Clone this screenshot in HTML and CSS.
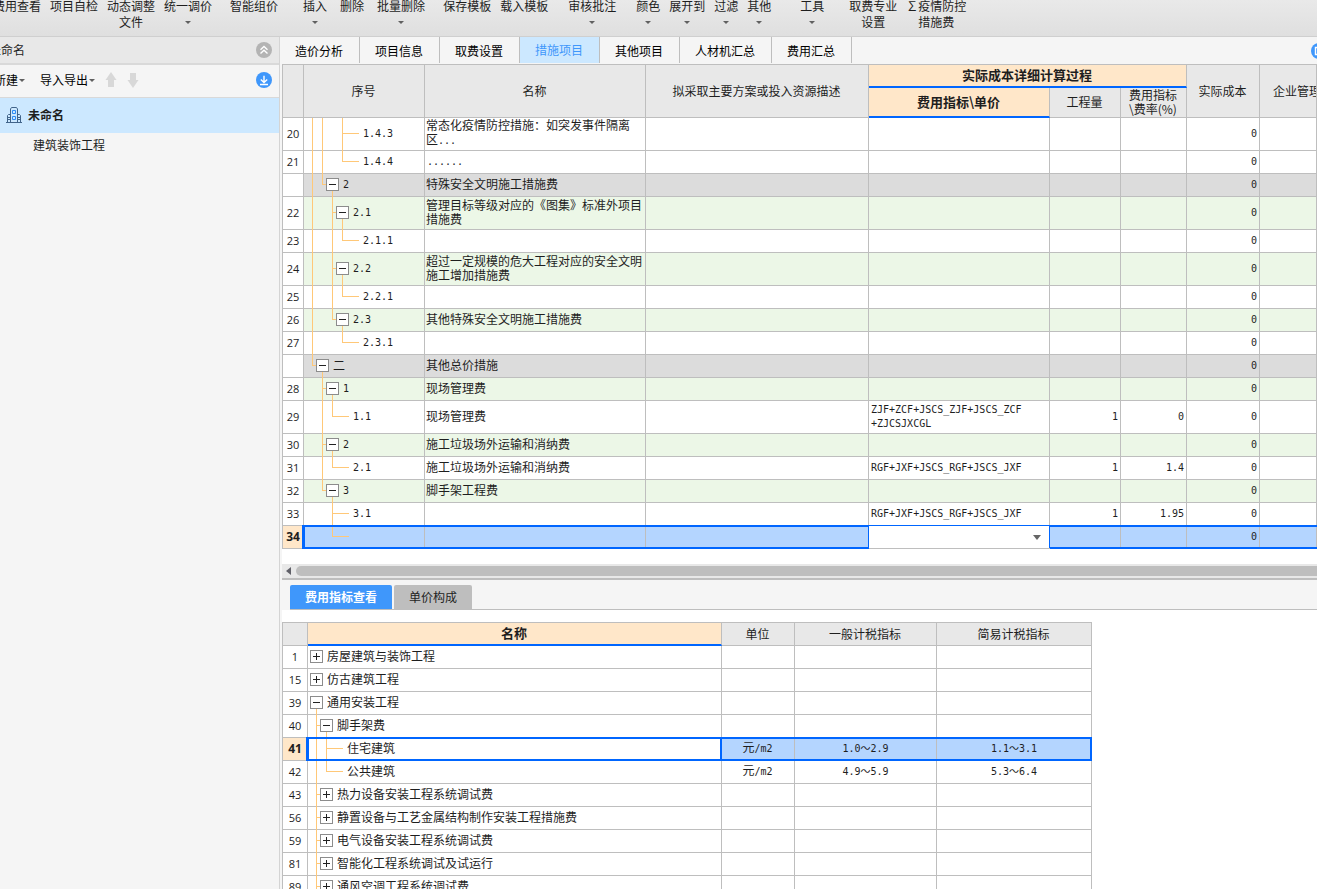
FILE: index.html
```html
<!DOCTYPE html>
<html lang="zh-CN">
<head>
<meta charset="utf-8">
<title>措施项目</title>
<link rel="stylesheet" href="styles.css">
</head>
<body>
<header class="ribbon">
  <div class="group"><button>费用查看</button><button>项目自检</button><button>动态调整<br>文件</button><button>统一调价<i class="caret"></i></button></div>
  <div class="group near"><button>智能组价</button></div>
  <div class="group mid wide"><button>插入<i class="caret"></i></button><button>删除</button><button>批量删除<i class="caret"></i></button></div>
  <div class="group near"><button>保存模板</button><button>载入模板</button></div>
  <div class="group step"><button>审核批注<i class="caret"></i></button></div>
  <div class="group step"><button>颜色<i class="caret"></i></button><button>展开到<i class="caret"></i></button><button>过滤<i class="caret"></i></button><button>其他<i class="caret"></i></button></div>
  <div class="group far"><button>工具<i class="caret"></i></button></div>
  <div class="group mid"><button>取费专业<br>设置</button><button>∑疫情防控<br>措施费</button></div>
</header>
<div class="workspace">
  <aside class="sidebar">
    <div class="side-head"><span class="project">未命名</span>
      <button class="round" aria-label="收起"><svg width="16" height="16" viewBox="0 0 16 16"><circle cx="8" cy="8" r="8" fill="#b4b4b4"/><path d="M4.500 7.800 8 4.500l3.500 3.300M4.500 11.500 8 8.200l3.500 3.300" fill="none" stroke="#fff" stroke-width="1.400"/></svg></button>
    </div>
    <div class="side-tools">
      <button class="menu">新建<i class="caret"></i></button>
      <button class="menu">导入导出<i class="caret"></i></button>
      <button class="arrow" aria-label="上移"><svg width="12" height="16" viewBox="0 0 12 16"><path d="M6 0 11.500 8H9v7H3V8H.5z" fill="#d8d8d8"/></svg></button>
      <button class="arrow" aria-label="下移"><svg width="12" height="16" viewBox="0 0 12 16"><path d="M6 16 .5 8H3V1h6v7h2.500z" fill="#d8d8d8"/></svg></button>
      <button class="round" aria-label="下载"><svg width="16" height="16" viewBox="0 0 16 16"><circle cx="8" cy="8" r="8" fill="#3f97fb"/><path d="M8 3.800v6.500M4.800 7.500 8 10.500l3.200-3M4 12.500h8" fill="none" stroke="#fff" stroke-width="1.400"/></svg></button>
    </div>
    <div class="node active">
      <svg width="16" height="16" viewBox="0 0 16 16" fill="none" stroke="#41648a"><path d="M0 15.500h16M1.500 15V8.500l1-1H4M14.500 15V8.500l-1-1H12M4.500 15V2L5.500.5h5L11.500 2v13M2 10.500h2M2 12.500h2M12 10.500h2M12 12.500h2"/><path d="M6.500 3.500h3v3h-3zM6.500 9.500h3v3h-3z" stroke="#2f8cf5"/></svg>
      <span>未命名</span>
    </div>
    <div class="node child">建筑装饰工程</div>
  </aside>
  <main class="content">
    <nav class="tabs">
      <button>造价分析</button><button>项目信息</button><button>取费设置</button><button class="on">措施项目</button><button>其他项目</button><button>人材机汇总</button><button>费用汇总</button>
      <svg class="more" width="16" height="16" viewBox="0 0 16 16"><circle cx="8" cy="8" r="8" fill="#3f97fb"/><path d="M4.500 4.500h7v7h-7z" fill="none" stroke="#fff" stroke-width="1.400"/></svg>
    </nav>
    <section class="upper">
      <table class="sheet measures">
        <colgroup><col class="c-no"><col class="c-seq"><col class="c-name"><col class="c-plan"><col class="c-index"><col class="c-qty"><col class="c-rate"><col class="c-cost"><col></colgroup>
        <thead>
          <tr class="h1"><th rowspan="2"></th><th rowspan="2">序号</th><th rowspan="2">名称</th><th rowspan="2">拟采取主要方案或投入资源描述</th><th colspan="3" class="hot">实际成本详细计算过程</th><th rowspan="2">实际成本</th><th rowspan="2" class="cut">企业管理费</th></tr>
          <tr class="h2"><th class="hot">费用指标\单价</th><th>工程量</th><th>费用指标<br>\费率(%)</th></tr>
        </thead>
        <tbody>
          <tr class="tall"><th>20</th><td><div class="tree"><i class="v"></i><i class="v"></i><i></i><i class="t"></i><b></b><span>1.4.3</span></div></td><td>常态化疫情防控措施：如突发事件隔离<br>区<span class="m">...</span></td><td></td><td></td><td></td><td></td><td class="n">0</td><td></td></tr>
          <tr><th>21</th><td><div class="tree"><i class="v"></i><i class="v"></i><i></i><i class="l"></i><b></b><span>1.4.4</span></div></td><td class="m">......</td><td></td><td></td><td></td><td></td><td class="n">0</td><td></td></tr>
          <tr class="sum"><th></th><td><div class="tree"><i class="v"></i><i class="l"></i><button class="open" aria-label="折叠"></button><span>2</span></div></td><td>特殊安全文明施工措施费</td><td></td><td></td><td></td><td></td><td class="n">0</td><td></td></tr>
          <tr class="tall sub"><th>22</th><td><div class="tree"><i class="v"></i><i></i><i class="t"></i><button class="open" aria-label="折叠"></button><span>2.1</span></div></td><td>管理目标等级对应的《图集》标准外项目措施费</td><td></td><td></td><td></td><td></td><td class="n">0</td><td></td></tr>
          <tr><th>23</th><td><div class="tree"><i class="v"></i><i></i><i class="v"></i><i class="l"></i><b></b><span>2.1.1</span></div></td><td></td><td></td><td></td><td></td><td></td><td class="n">0</td><td></td></tr>
          <tr class="tall sub"><th>24</th><td><div class="tree"><i class="v"></i><i></i><i class="t"></i><button class="open" aria-label="折叠"></button><span>2.2</span></div></td><td>超过一定规模的危大工程对应的安全文明施工增加措施费</td><td></td><td></td><td></td><td></td><td class="n">0</td><td></td></tr>
          <tr><th>25</th><td><div class="tree"><i class="v"></i><i></i><i class="v"></i><i class="l"></i><b></b><span>2.2.1</span></div></td><td></td><td></td><td></td><td></td><td></td><td class="n">0</td><td></td></tr>
          <tr class="sub"><th>26</th><td><div class="tree"><i class="v"></i><i></i><i class="l"></i><button class="open" aria-label="折叠"></button><span>2.3</span></div></td><td>其他特殊安全文明施工措施费</td><td></td><td></td><td></td><td></td><td class="n">0</td><td></td></tr>
          <tr><th>27</th><td><div class="tree"><i class="v"></i><i></i><i></i><i class="l"></i><b></b><span>2.3.1</span></div></td><td></td><td></td><td></td><td></td><td></td><td class="n">0</td><td></td></tr>
          <tr class="sum"><th></th><td><div class="tree"><i class="l"></i><button class="open" aria-label="折叠"></button><span class="zh">二</span></div></td><td>其他总价措施</td><td></td><td></td><td></td><td></td><td class="n">0</td><td></td></tr>
          <tr class="sub"><th>28</th><td><div class="tree"><i></i><i class="t"></i><button class="open" aria-label="折叠"></button><span>1</span></div></td><td>现场管理费</td><td></td><td></td><td></td><td></td><td class="n">0</td><td></td></tr>
          <tr class="tall"><th>29</th><td><div class="tree"><i></i><i class="v"></i><i class="l"></i><b></b><span>1.1</span></div></td><td>现场管理费</td><td></td><td class="m">ZJF+ZCF+JSCS_ZJF+JSCS_ZCF<br>+ZJCSJXCGL</td><td class="n">1</td><td class="n">0</td><td class="n">0</td><td></td></tr>
          <tr class="sub"><th>30</th><td><div class="tree"><i></i><i class="t"></i><button class="open" aria-label="折叠"></button><span>2</span></div></td><td>施工垃圾场外运输和消纳费</td><td></td><td></td><td></td><td></td><td class="n">0</td><td></td></tr>
          <tr><th>31</th><td><div class="tree"><i></i><i class="v"></i><i class="l"></i><b></b><span>2.1</span></div></td><td>施工垃圾场外运输和消纳费</td><td></td><td class="m">RGF+JXF+JSCS_RGF+JSCS_JXF</td><td class="n">1</td><td class="n">1.4</td><td class="n">0</td><td></td></tr>
          <tr class="sub"><th>32</th><td><div class="tree"><i></i><i class="l"></i><button class="open" aria-label="折叠"></button><span>3</span></div></td><td>脚手架工程费</td><td></td><td></td><td></td><td></td><td class="n">0</td><td></td></tr>
          <tr><th>33</th><td><div class="tree"><i></i><i></i><i class="t"></i><b></b><span>3.1</span></div></td><td></td><td></td><td class="m">RGF+JXF+JSCS_RGF+JSCS_JXF</td><td class="n">1</td><td class="n">1.95</td><td class="n">0</td><td></td></tr>
          <tr class="picked"><th>34</th><td><div class="tree"><i></i><i></i><i class="l"></i><b></b><span></span></div></td><td></td><td></td><td class="editor"><select aria-label="费用指标\单价"><option></option></select><svg width="8" height="5" viewBox="0 0 8 5"><path d="M0 0h8L4 5z" fill="#666"/></svg></td><td></td><td></td><td class="n">0</td><td></td></tr>
        </tbody>
      </table>
    </section>
    <div class="scroller"><svg width="5" height="8" viewBox="0 0 5 8"><path d="M5 0v8L0 4z" fill="#606068"/></svg><span class="thumb"></span></div>
    <nav class="subtabs"><button class="on">费用指标查看</button><button>单价构成</button></nav>
    <section class="lower">
      <table class="sheet indexes">
        <colgroup><col class="d-no"><col class="d-name"><col class="d-unit"><col class="d-general"><col class="d-simple"></colgroup>
        <thead><tr><th></th><th class="hot">名称</th><th>单位</th><th>一般计税指标</th><th>简易计税指标</th></tr></thead>
        <tbody>
          <tr><th>1</th><td><div class="tree"><button aria-label="展开"></button><span class="zh">房屋建筑与装饰工程</span></div></td><td></td><td></td><td></td></tr>
          <tr><th>15</th><td><div class="tree"><button aria-label="展开"></button><span class="zh">仿古建筑工程</span></div></td><td></td><td></td><td></td></tr>
          <tr><th>39</th><td><div class="tree"><button class="open" aria-label="折叠"></button><span class="zh">通用安装工程</span></div></td><td></td><td></td><td></td></tr>
          <tr><th>40</th><td><div class="tree"><i class="t"></i><button class="open" aria-label="折叠"></button><span class="zh">脚手架费</span></div></td><td></td><td></td><td></td></tr>
          <tr class="picked"><th>41</th><td class="focus"><div class="tree"><i class="v"></i><i class="t"></i><b></b><span class="zh">住宅建筑</span></div></td><td class="c">元<span class="m">/m2</span></td><td class="c m">1.0～2.9</td><td class="c m">1.1～3.1</td></tr>
          <tr><th>42</th><td><div class="tree"><i class="v"></i><i class="l"></i><b></b><span class="zh">公共建筑</span></div></td><td class="c">元<span class="m">/m2</span></td><td class="c m">4.9～5.9</td><td class="c m">5.3～6.4</td></tr>
          <tr><th>43</th><td><div class="tree"><i class="t"></i><button aria-label="展开"></button><span class="zh">热力设备安装工程系统调试费</span></div></td><td></td><td></td><td></td></tr>
          <tr><th>56</th><td><div class="tree"><i class="t"></i><button aria-label="展开"></button><span class="zh">静置设备与工艺金属结构制作安装工程措施费</span></div></td><td></td><td></td><td></td></tr>
          <tr><th>59</th><td><div class="tree"><i class="t"></i><button aria-label="展开"></button><span class="zh">电气设备安装工程系统调试费</span></div></td><td></td><td></td><td></td></tr>
          <tr><th>81</th><td><div class="tree"><i class="t"></i><button aria-label="展开"></button><span class="zh">智能化工程系统调试及试运行</span></div></td><td></td><td></td><td></td></tr>
          <tr><th>89</th><td><div class="tree"><i class="t"></i><button aria-label="展开"></button><span class="zh">通风空调工程系统调试费</span></div></td><td></td><td></td><td></td></tr>
        </tbody>
      </table>
    </section>
  </main>
</div>
</body>
</html>
```
FILE: styles.css
```css
* { box-sizing: border-box; }
body {
  margin: 0;
  height: 100vh;
  overflow: hidden;
  display: flex;
  flex-direction: column;
  background: #f5f5f5;
  color: #1e1e1e;
  font: 12px/16px "Noto Sans CJK SC", sans-serif;
}
button {
  margin: 0;
  padding: 0;
  border: 0;
  background: none;
  color: inherit;
  font: inherit;
  white-space: nowrap;
}
svg { display: block; flex: none; }
.caret {
  display: block;
  border: 3px solid transparent;
  border-top-color: #606060;
  border-bottom: 0;
}

/* Ribbon */
.ribbon {
  flex: none;
  display: flex;
  height: 37px;
  overflow: hidden;
  background: linear-gradient(#e9e9e9, #dfdfdf);
  border-bottom: 1px solid #cfcfcf;
}
.group { display: flex; flex: none; align-items: flex-start; gap: 9px; margin-left: -7px; }
.group button { margin-top: -2px; }
.group .caret { width: 6px; margin: 7px auto 0; }
.group.near { margin-left: 18px; }
.group.step { margin-left: 20px; }
.group.mid { margin-left: 25px; }
.group.far { margin-left: 29px; }
.group.wide { gap: 13px; }

/* Sidebar */
.workspace { flex: 1; display: flex; min-height: 0; }
.sidebar { width: 280px; flex: none; border-right: 1px solid #d4d4d4; }
.side-head {
  display: flex;
  align-items: center;
  height: 28px;
  padding-right: 7px;
  background: #e8e8e8;
  border-bottom: 2px solid #d9d9d9;
}
.project { margin-left: -11px; }
.round { margin-left: auto; }
.side-tools {
  display: flex;
  align-items: center;
  height: 33px;
  padding: 0 7px 2px 0;
  border-bottom: 1px solid #d9d9d9;
}
.menu { display: flex; align-items: center; color: #000; margin-left: -6px; }
.menu .caret { margin-left: 1px; }
.menu + .menu { margin-left: 15px; }
.arrow { margin-left: 10px; }
.node { display: flex; align-items: center; padding-bottom: 2px; }
.node.active { height: 35px; padding-left: 6px; gap: 6px; background: #cce8ff; font-weight: bold; }
.node.child { height: 26px; padding-left: 33px; }

/* Content */
.content { flex: 1; min-width: 0; display: flex; flex-direction: column; overflow: hidden; }
.tabs { flex: none; display: flex; align-items: center; height: 27px; color: #000; }
.tabs button { height: 26px; padding: 2px 16px 0 15px; margin-bottom: 1px; border-right: 1px solid #bebebe; }
.tabs .on { padding-top: 0; background: #cce8ff; color: #3f97fb; }
.more { margin: 0 -10px 0 auto; }
.upper, .lower { margin-left: 2px; background: #fff; }
.upper { flex: none; padding-bottom: 15px; }
.lower { flex: 1; min-height: 0; padding-top: 12px; overflow: hidden; }

.sheet {
  table-layout: fixed;
  border-spacing: 0;
  border-top: 1px solid #bebebe;
  line-height: 14px;
  background: #fff;
}
.sheet th, .sheet td {
  padding: 0 2px 2px 1px;
  border: 0 solid #bebebe;
  border-width: 0 1px 1px 0;
  overflow: hidden;
}
.sheet th:first-child { border-left-width: 1px; }
.sheet tr.h2 th:first-child { border-left-width: 0; }
.sheet tbody th { padding: 0; font: 11px/14px "Open Sans", sans-serif; }
.sheet td { text-align: left; height: 23px; }
.sheet .tall td { height: 33px; }
.sheet thead th { padding-bottom: 1px; background: #e8e8e8; font-weight: normal; height: 23px; }
.sheet thead .h2 th { height: 30px; }
.sheet thead .hot { background: #ffe7c9; font-weight: bold; font-size: 13px; border-bottom: 2px solid #0066ff; }
.sheet thead .cut { text-align: left; padding-left: 13px; white-space: nowrap; }
.sheet .n { padding: 0 2px; text-align: right; }
.sheet .m { padding: 0 2px; }
.sheet .c { text-align: center; }
.sheet span.m { padding: 0; }
.sheet .n, .m, .tree { font-family: "DejaVu Sans Mono", "Noto Sans CJK SC", monospace; font-size: 10px; }
.sheet .sum td { background: #dcdcdc; }
.sheet .sub td { background: #ecf7e7; }

.measures { width: 100%; }
.c-no { width: 22px; }
.c-seq { width: 121px; }
.c-name { width: 221px; }
.c-plan { width: 223px; }
.c-index { width: 181px; }
.c-qty { width: 71px; }
.c-rate { width: 66px; }
.c-cost { width: 73px; }
.indexes { width: 810px; }
.d-no { width: 26px; }
.d-name { width: 414px; }
.d-unit { width: 73px; }
.d-general { width: 142px; }
.d-simple { width: 155px; }

/* Tree guides */
.sheet td:nth-child(2) { padding: 0 0 0 3px; overflow: visible; }
.tree { display: flex; align-items: center; height: 22px; }
.tall .tree { height: 32px; }
.tree i { position: relative; flex: none; width: 10px; height: 100%; }
.tree i::before { content: ""; position: absolute; left: 5px; top: 0; bottom: -1px; border-left: 1px solid #ffc878; }
.tree i:not([class])::before { display: none; }
.tree .l::before { bottom: 50%; }
.tree .t::after, .tree .l::after { content: ""; position: absolute; left: 5px; right: 0; top: 50%; margin-top: -1px; border-top: 1px solid #ffc878; }
.tree b { flex: none; width: 12px; height: 1px; margin-bottom: 1px; background: #ffc878; }
.tree button {
  position: relative;
  flex: none;
  width: 13px;
  height: 13px;
  margin: 0 0 1px -1px;
  border: 1px solid #8c8c8c;
  background: linear-gradient(#222, #222) center / 7px 1px no-repeat, linear-gradient(#222, #222) center / 1px 7px no-repeat, #fff;
}
.tree .open { background: linear-gradient(#222, #222) center / 7px 1px no-repeat, #fff; }
.tree .open::after { content: ""; position: absolute; left: 5px; top: 12px; height: 6px; border-left: 1px solid #ffc878; }
.tall .tree .open::after { height: 11px; }
.tree span { margin-left: 4px; white-space: nowrap; }
.tree .zh { margin-bottom: 2px; font: 12px/14px "Noto Sans CJK SC", sans-serif; }

/* Current row */
.picked { position: relative; }
.sheet .picked td { background: #b4d5ff; }
.sheet .picked th { background: #ffe7c9; font-weight: bold; font-size: 12px; }
.sheet .picked .focus { background: #fff; border-right: 2px solid #0066ff; }
.picked td:last-child::after {
  content: "";
  position: absolute;
  z-index: 1;
  top: -1px;
  bottom: 0;
  left: 20px;
  right: -3px;
  border: 2px solid #0066ff;
  border-left-width: 3px;
  pointer-events: none;
}
.indexes .picked td:last-child::after { left: 24px; right: 0; }
.sheet .picked .editor { position: relative; z-index: 2; overflow: visible; }
.editor select {
  position: absolute;
  inset: 0 -1px;
  width: calc(100% + 2px);
  height: 100%;
  border: 1px solid #0066ff;
  border-width: 0 1px;
  border-radius: 0;
  background: #fff;
  appearance: none;
}
.editor svg { position: absolute; right: 8px; top: 9px; pointer-events: none; }

.scroller {
  flex: none;
  display: flex;
  align-items: center;
  gap: 5px;
  height: 16px;
  margin-left: 2px;
  padding-left: 4px;
  background: #e8e8e8;
  border-bottom: 2px solid #bebebe;
}
.thumb { flex: 1; height: 10px; border-radius: 5px 0 0 5px; background: #bebebe; }
.subtabs {
  flex: none;
  display: flex;
  align-items: flex-end;
  gap: 2px;
  height: 30px;
  margin-left: 10px;
  border-bottom: 1px solid #bebebe;
}
.subtabs button { height: 24px; padding: 0 15px; border-radius: 2px 2px 0 0; background: #bebebe; }
.subtabs .on { background: #3f97fb; color: #fff; font-weight: bold; }
```
